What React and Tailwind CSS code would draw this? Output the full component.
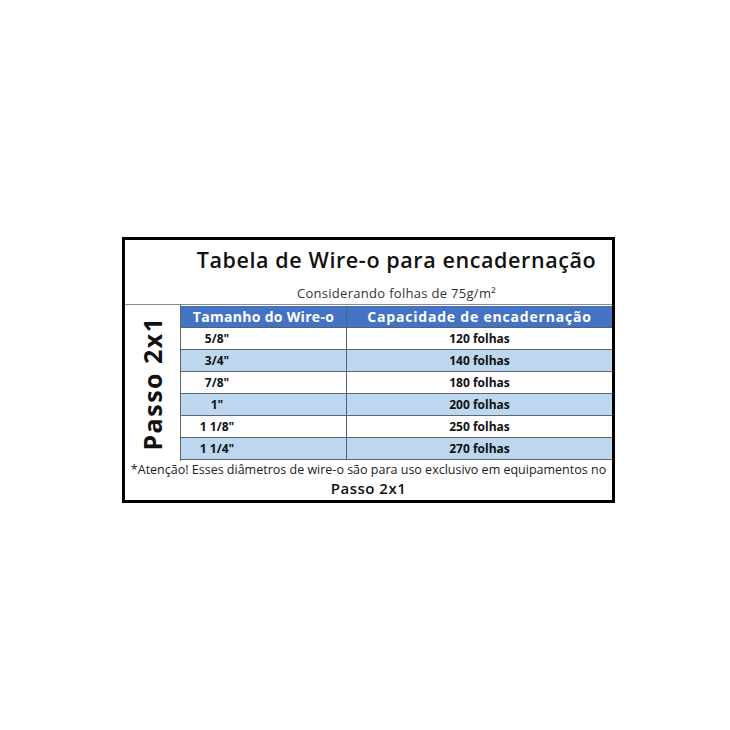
import React from "react";

const rows = [
	{ size: "5/8\"", cap: "120 folhas", light: false },
	{ size: "3/4\"", cap: "140 folhas", light: true },
	{ size: "7/8\"", cap: "180 folhas", light: false },
	{ size: "1\"", cap: "200 folhas", light: true },
	{ size: "1 1/8\"", cap: "250 folhas", light: false },
	{ size: "1 1/4\"", cap: "270 folhas", light: true },
];

const App = () => {
	return (
		<div className="w-[730px] h-[730px] bg-white pt-[237px] pl-[122px] font-['Open_Sans',sans-serif] text-[#111]">
			<div className="w-[493px] h-[266px] border-[3px] border-black flex flex-col">
				{/* title */}
				<div className="h-[65px] pl-[56px] flex flex-col items-center border-b border-[#8a8a8a]">
					<h1 className="mt-[5px] text-[21.5px] font-semibold tracking-[0.6px] leading-[30px] whitespace-nowrap">Tabela de Wire-o para encadernação</h1>
					<p className="mt-[10px] text-[13px] tracking-[0.3px] leading-[17px] text-[#333]">Considerando folhas de 75g/m²</p>
				</div>

				<div className="flex">
					<div className="w-[56px] h-[156px] flex items-center justify-center border-r border-[#666]">
						<span className="-rotate-90 whitespace-nowrap text-[25px] font-bold tracking-[1.5px] leading-none">Passo 2x1</span>
					</div>
					<div className="flex-1 flex flex-col">
						<div className="h-[22px] mt-[1px] flex bg-[#4472c4] text-white text-[14px] font-bold leading-[22px] border-b border-[#55607a] whitespace-nowrap">
							<div className="w-[166px] text-center tracking-[0.3px] border-r border-[#55607a]">Tamanho do Wire-o</div>
							<div className="flex-1 text-center tracking-[0.8px]">Capacidade de encadernação</div>
						</div>
						{rows.map((r) => (
							<div key={r.size} className={"h-[22px] flex text-[12px] font-bold leading-[21px] border-b border-[#5f6673] " + (r.light ? "bg-[#bdd7ee]" : "bg-white")}>
								<div className="w-[166px] border-r border-[#55607a]">
									<div className="w-[72px] text-center">{r.size}</div>
								</div>
								<div className="flex-1 text-center">{r.cap}</div>
							</div>
						))}
					</div>
				</div>

				<div className="flex flex-col items-center">
					<p className="mt-[1px] text-[12.5px] leading-[16px] text-[#222] whitespace-nowrap">*Atenção! Esses diâmetros de wire-o são para uso exclusivo em equipamentos no</p>
					<p className="text-[15px] font-semibold leading-[20px] tracking-[0.5px]">Passo 2x1</p>
				</div>
			</div>
		</div>
	);
};

export default App;
